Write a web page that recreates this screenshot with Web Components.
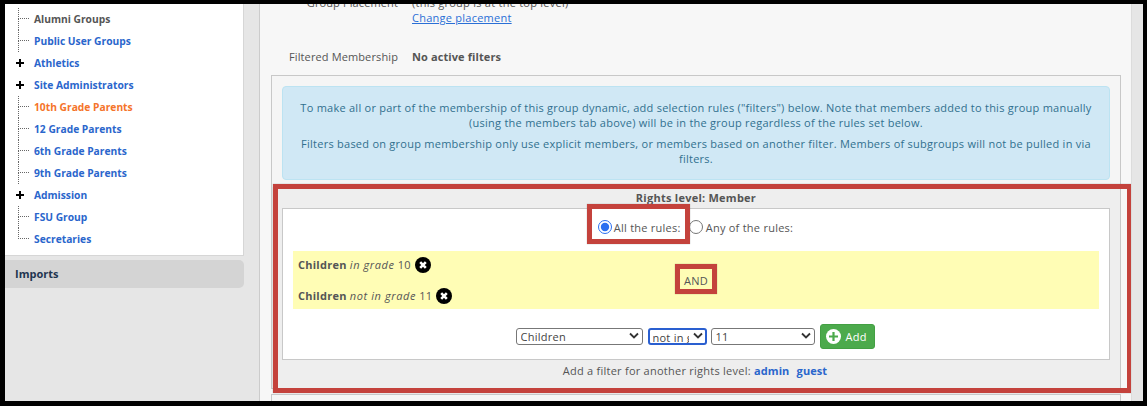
<!DOCTYPE html>
<html>
<head>
<meta charset="utf-8">
<style>
  html, body { margin: 0; height: 100%; background: #000; overflow: hidden; }
  body { font: 11px/15px "Open Sans", "DejaVu Sans", sans-serif; color: #555; }
  x-form-row b { letter-spacing: .1px; }
</style>
</head>
<body>
<x-app>
  <x-sidebar slot="side">
    <x-tree-item>Alumni Groups</x-tree-item>
    <x-tree-item link>Public User Groups</x-tree-item>
    <x-tree-item link kind="plus">Athletics</x-tree-item>
    <x-tree-item link kind="plus">Site Administrators</x-tree-item>
    <x-tree-item current>10th Grade Parents</x-tree-item>
    <x-tree-item link>12 Grade Parents</x-tree-item>
    <x-tree-item link>6th Grade Parents</x-tree-item>
    <x-tree-item link>9th Grade Parents</x-tree-item>
    <x-tree-item link kind="plus">Admission</x-tree-item>
    <x-tree-item link>FSU Group</x-tree-item>
    <x-tree-item link kind="last">Secretaries</x-tree-item>
  </x-sidebar>
  <x-form-row label="Group Placement">
    (this group is at the top level)<br>
    <a href="#" style="color:#2a6fd6">Change placement</a>
  </x-form-row>
  <x-form-row label="Filtered Membership" style="margin-top:24px"><b>No active filters</b></x-form-row>
  <x-filter-panel></x-filter-panel>
</x-app>

<template id="sidebar-tpl">
  <style>
    :host { display: block; width: 255px; height: 100%; flex: none; box-sizing: border-box; background: #e6e6e6; border-right: 1px solid #ccc; }
    .tree { background: #fff; width: 239px; height: 252px; box-sizing: border-box; padding-top: 4px; border-right: 1px solid #d6d6d6; border-bottom: 1px solid #d6d6d6; }
    .imports { margin-top: 4px; width: 239px; height: 28px; line-height: 28px; box-sizing: border-box; padding-left: 10px; background: #d4d4d4; border-radius: 0 5px 5px 0; font-weight: 700; color: #1f3550; }
  </style>
  <div class="tree"><slot></slot></div>
  <div class="imports">Imports</div>
</template>

<template id="tree-item-tpl">
  <style>
    :host { display: flex; align-items: stretch; height: 22px; line-height: 22px; font-size: 10.25px; font-weight: 700; color: #555; }
    :host([link]) { color: #2a66cc; }
    :host([current]) { color: #f5742a; }
    .gutter { width: 29px; flex: none; display: flex; flex-direction: column; box-sizing: border-box; padding-left: 13px; }
    .twig { height: 11px; box-sizing: border-box; width: 11px; border-left: 1px dotted #666; border-bottom: 1px dotted #666; }
    .stem { height: 11px; border-left: 1px dotted #666; }
    :host([kind="last"]) .stem { border-left: 0; }
    :host([kind="plus"]) .twig, :host([kind="plus"]) .stem { display: none; }
    .plus { display: none; margin: 7px 0 0 -2px; }
    :host([kind="plus"]) .plus { display: block; }
  </style>
  <div class="gutter">
    <div class="twig"></div><div class="stem"></div>
    <svg class="plus" width="8" height="8" viewBox="0 0 9 9"><path d="M3.4 0h2.2v3.4H9v2.2H5.6V9H3.4V5.6H0V3.4h3.4z" fill="#000"/></svg>
  </div>
  <slot></slot>
</template>

<template id="app-tpl">
  <style>
    :host { display: flex; box-sizing: border-box; position: fixed; left: 5px; top: 4px; width: 1138px; height: 397px; overflow: hidden; background: #e6e6e6; }
    .main { width: 871px; flex: none; box-sizing: border-box; padding: 0 10px 0 11px; background: #f7f7f7; height: 100%; overflow: hidden; }
    .scroll { margin-top: -9px; }
    .strip { flex: 1; border-left: 1px solid #dcdcdc; }
  </style>
  <slot name="side"></slot>
  <div class="main"><div class="scroll"><slot></slot></div></div>
  <div class="strip"></div>
</template>

<template id="form-row-tpl">
  <style>
    :host { display: grid; grid-template-columns: 127px 1fr; column-gap: 14px; letter-spacing: .25px; }
    .label { text-align: right; letter-spacing: .12px; white-space: nowrap; }
  </style>
  <div class="label"></div>
  <div><slot></slot></div>
</template>

<template id="filter-panel-tpl">
  <style>
    :host { display: block; margin-top: 11px; letter-spacing: .25px; }
    .panel { border: 1px solid #c8c8c8; background: #f5f5f5; padding-top: 10px; }
    .info { margin: 0 10px; box-sizing: border-box; height: 94px; padding: 13px 8px; background: #d0e8f5; border: 1px solid #bce3f2; border-radius: 4px; color: #31708f; text-align: center; white-space: nowrap; }
    .info p { margin: 0 0 6px; }
    .rights { display: block; margin-top: 7px; height: 201px; background: #eee; box-sizing: border-box; padding: 3px 10px 0; --ring: -3px -12px -5px 1px; }
    .title { text-align: center; font-weight: 700; height: 18px; }
    .box { height: 152px; box-sizing: border-box; border: 1px solid #c8c8c8; background: #fff; padding: 0 10px; display: flex; flex-direction: column; }
    .match { display: flex; justify-content: center; align-items: center; height: 42px; box-sizing: border-box; padding: 0 1px 6px 0; flex: none; }
    .match label { display: flex; align-items: center; gap: 3px; }
    .match input { margin: 0; width: 14px; height: 14px; accent-color: #2a6ff0; }
    .ring-match { --ring: -16px -9px -9px -11px; }
    .ring-match label { gap: 2px; }
    .yellow { height: 58px; flex: none; background: #fffdb5; display: grid; grid-template-columns: 1fr auto 1fr; align-items: center; }
    .rules { padding-left: 5px; display: flex; flex-direction: column; gap: 15px; }
    .rules i { letter-spacing: .6px; }
    .ring-and { margin-top: 1px; --ring: -9px -9px -6px -9px; }
    .adder { display: flex; justify-content: center; align-items: center; gap: 5px; margin-top: 15px; height: 25px; padding-right: 2px; }
    .foot { text-align: center; margin-top: 3px; height: 15px; line-height: 15px; padding-right: 2px; }
    .foot a { color: #2a66cc; font-weight: 700; text-decoration: none; letter-spacing: .1px; }
    .foot a + a { margin-left: 4px; }
    .next { margin-top: 5px; height: 20px; border: 1px solid #c8c8c8; border-bottom: 0; background: #f5f5f5; }
  </style>
  <div class="panel">
    <div class="info">
      <p>To make all or part of the membership of this group dynamic, add selection rules ("filters") below. Note that members added to this group manually<br>(using the members tab above) will be in the group regardless of the rules set below.</p>
      <p>Filters based on group membership only use explicit members, or members based on another filter. Members of subgroups will not be pulled in via<br>filters.</p>
    </div>
    <x-highlight class="rights">
      <div class="title">Rights level: Member</div>
      <div class="box">
        <div class="match">
          <x-highlight class="ring-match"><label><input type="radio" name="m" checked>All the rules:</label></x-highlight>
          <label style="margin-left:8px"><input type="radio" name="m">Any of the rules:</label>
        </div>
        <div class="yellow">
          <div class="rules">
            <x-rule><b>Children</b> <i>in grade</i> 10</x-rule>
            <x-rule><b>Children</b> <i>not in grade</i> 11</x-rule>
          </div>
          <x-highlight class="ring-and">AND</x-highlight>
          <div></div>
        </div>
        <div class="adder">
          <x-select width="127" value="Children"></x-select>
          <x-select width="59" value="not in grade" focused></x-select>
          <x-select width="104" value="11" style="margin-left:-1px"></x-select>
          <x-add-button>Add</x-add-button>
        </div>
      </div>
      <div class="foot">Add a filter for another rights level: <a href="#">admin</a> <a href="#">guest</a></div>
    </x-highlight>
  </div>
  <div class="next"></div>
</template>

<template id="highlight-tpl">
  <style>
    :host { display: inline-block; position: relative; }
    .ring { position: absolute; inset: var(--ring, 0); border: 5px solid #c4423c; box-shadow: 0 0 1px rgba(0,0,0,.35); pointer-events: none; }
  </style>
  <slot></slot><div class="ring"></div>
</template>

<template id="rule-tpl">
  <style>
    :host { display: flex; align-items: center; gap: 4px; height: 16px; white-space: pre; }
    svg { flex: none; }
  </style>
  <span><slot></slot></span>
  <svg width="16" height="16" viewBox="0 0 16 16"><circle cx="8" cy="8" r="8" fill="#000"/><path d="M5.2 5.2l5.6 5.6M10.8 5.2l-5.6 5.6" stroke="#fff" stroke-width="2.6"/></svg>
</template>

<template id="select-tpl">
  <style>
    :host { display: inline-block; position: relative; height: 17px; }
    select { appearance: none; display: block; width: 100%; height: 17px; box-sizing: border-box; margin: 0; padding: 0 16px 0 4px; font: inherit; letter-spacing: inherit; line-height: 15px; color: #444; background: #fff; border: 1px solid #777; border-radius: 3px; outline: none; }
    :host([focused]) select { border: 2px solid #2a5fd0; padding-left: 3px; }
    svg { position: absolute; right: 4px; top: 4px; pointer-events: none; }
  </style>
  <select></select>
  <svg width="10" height="8" viewBox="0 0 10 8"><path d="M1 1.5l4 4 4-4" fill="none" stroke="#333" stroke-width="1.8"/></svg>
</template>

<template id="add-button-tpl">
  <style>
    :host { display: inline-flex; align-items: center; gap: 5px; box-sizing: border-box; width: 55px; height: 25px; padding-left: 5px; background: #4caa4c; border: 1px solid #43a043; border-radius: 3px; color: #fff; }
  </style>
  <svg width="15" height="15" viewBox="0 0 15 15"><circle cx="7.5" cy="7.5" r="7.5" fill="#fff"/><path d="M6.4 3h2.2v3.4H12v2.2H8.6V12H6.4V8.6H3V6.4h3.4z" fill="#4caa4c"/></svg>
  <slot></slot>
</template>

<script>
  // every element just stamps its template into an open shadow root
  class Stamped extends HTMLElement {
    constructor() {
      super();
      this.attachShadow({ mode: 'open' });
      const tpl = document.getElementById(this.constructor.tpl);
      this.shadowRoot.appendChild(tpl.content.cloneNode(true));
    }
  }

  class XApp extends Stamped { static tpl = 'app-tpl'; }
  class XSidebar extends Stamped {
    static tpl = 'sidebar-tpl';
    connectedCallback() { this.slot = 'side'; }
  }
  class XTreeItem extends Stamped { static tpl = 'tree-item-tpl'; }
  class XFormRow extends Stamped {
    static tpl = 'form-row-tpl';
    connectedCallback() {
      this.shadowRoot.querySelector('.label').textContent = this.getAttribute('label');
    }
  }
  class XFilterPanel extends Stamped { static tpl = 'filter-panel-tpl'; }
  class XHighlight extends Stamped { static tpl = 'highlight-tpl'; }
  class XRule extends Stamped { static tpl = 'rule-tpl'; }
  class XSelect extends Stamped {
    static tpl = 'select-tpl';
    connectedCallback() {
      this.style.width = this.getAttribute('width') + 'px';
      const opt = document.createElement('option');
      opt.textContent = this.getAttribute('value');
      this.shadowRoot.querySelector('select').appendChild(opt);
    }
  }
  class XAddButton extends Stamped { static tpl = 'add-button-tpl'; }

  customElements.define('x-sidebar', XSidebar);
  customElements.define('x-tree-item', XTreeItem);
  customElements.define('x-form-row', XFormRow);
  customElements.define('x-highlight', XHighlight);
  customElements.define('x-rule', XRule);
  customElements.define('x-select', XSelect);
  customElements.define('x-add-button', XAddButton);
  customElements.define('x-filter-panel', XFilterPanel);
  customElements.define('x-app', XApp);
</script>
</body>
</html>
